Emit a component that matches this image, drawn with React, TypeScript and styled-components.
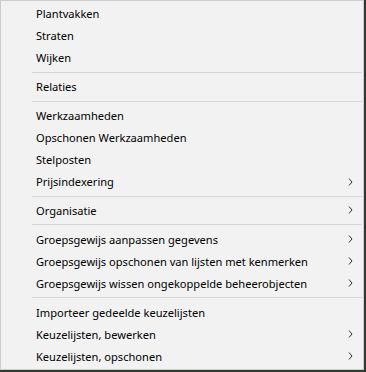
import React from 'react';
import styled, { createGlobalStyle } from 'styled-components';

const GlobalStyle = createGlobalStyle`
  html, body {
    margin: 0;
    padding: 0;
    background: #2f3a2e;
  }
`;

type Entry = { label: string; sub?: boolean } | 'sep';

const entries: Entry[] = [
  { label: 'Plantvakken' },
  { label: 'Straten' },
  { label: 'Wijken' },
  'sep',
  { label: 'Relaties' },
  'sep',
  { label: 'Werkzaamheden' },
  { label: 'Opschonen Werkzaamheden' },
  { label: 'Stelposten' },
  { label: 'Prijsindexering', sub: true },
  'sep',
  { label: 'Organisatie', sub: true },
  'sep',
  { label: 'Groepsgewijs aanpassen gegevens', sub: true },
  { label: 'Groepsgewijs opschonen van lijsten met kenmerken', sub: true },
  { label: 'Groepsgewijs wissen ongekoppelde beheerobjecten', sub: true },
  'sep',
  { label: 'Importeer gedeelde keuzelijsten' },
  { label: 'Keuzelijsten, bewerken', sub: true },
  { label: 'Keuzelijsten, opschonen', sub: true },
];

const Menu = styled.div`
  box-sizing: border-box;
  width: 364px;
  height: 370px;
  background: #f2f2f2;
  border: 1px solid #cccccc;
  padding: 2px 0 2px 0;
  display: flex;
  flex-direction: column;
  font-family: 'Noto Sans', 'Open Sans', sans-serif;
  font-size: 11.1px;
  color: #000;
`;

const Item = styled.div`
  height: 22px;
  display: flex;
  align-items: center;
  justify-content: space-between;
  padding: 0 10px 0 35px;
  white-space: nowrap;
`;

const Separator = styled.div`
  height: 1px;
  background: #d7d7d7;
  margin: 3px 1px 3px 31px;
`;

const Chevron = () => (
  <svg width="5" height="8" viewBox="0 0 5 8">
    <path d="M1 0.5 L4 4 L1 7.5" fill="none" stroke="#333" strokeWidth="1" />
  </svg>
);

const App = () => {
  return (
    <>
      <GlobalStyle />
      <Menu>
        {entries.map((e, i) =>
          e === 'sep' ? (
            <Separator key={i} />
          ) : (
            <Item key={i}>
              <span>{e.label}</span>
              {e.sub && <Chevron />}
            </Item>
          )
        )}
      </Menu>
    </>
  );
};

export default App;
